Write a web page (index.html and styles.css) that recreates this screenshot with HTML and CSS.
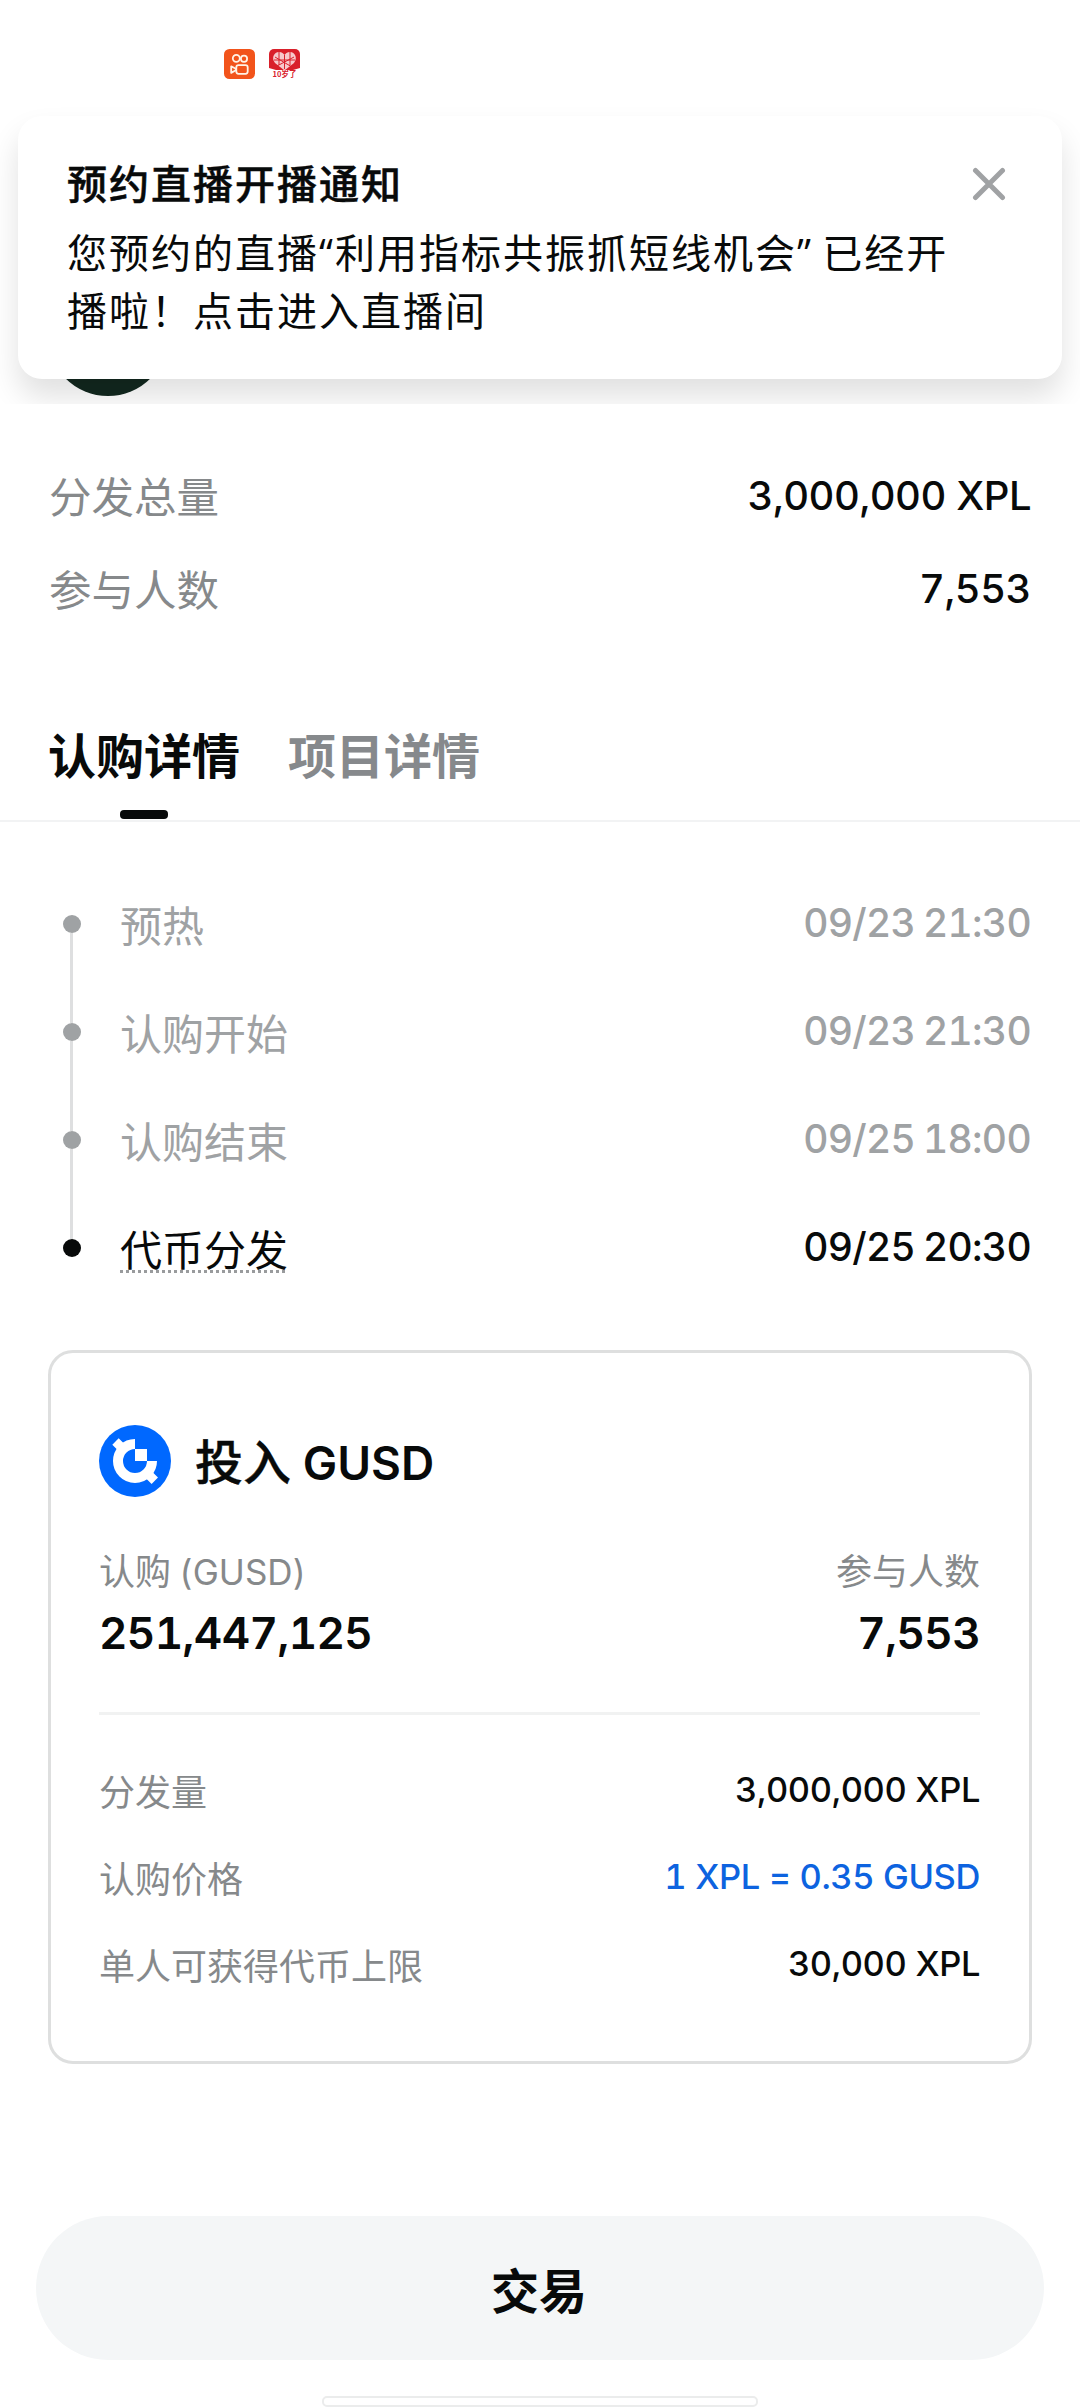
FILE: index.html
```html
<!DOCTYPE html>
<html lang="zh-CN">
<head>
<meta charset="utf-8">
<title>GUSD</title>
<link rel="stylesheet" href="styles.css">
</head>
<body>
<div class="screen">
  <header class="top">
    <div class="status">
      <svg class="app" viewBox="0 0 31 30">
        <rect width="31" height="30" rx="5.5" fill="#f2541b"/>
        <g fill="none" stroke="#fff3e6" stroke-width="1.8">
          <circle cx="12.3" cy="9.3" r="3.5"/><circle cx="20" cy="9.8" r="3.1"/>
          <rect x="12.3" y="16.2" width="11.4" height="8.6" rx="2.2"/>
          <path d="M7.2 17.3l4.6 2.4v1.6l-4.6 2.6z" stroke-linejoin="round"/>
        </g>
      </svg>
      <svg class="app" viewBox="0 0 31 30">
        <path d="M5 0h21a5 5 0 0 1 5 5v14l-7 2H7l-7-2V5a5 5 0 0 1 5-5z" fill="#d9202b"/>
        <path d="M15.500 21.500L6 14C2 9 5 3 10 3c3 0 4.500 1.500 5.500 3 1-1.500 2.500-3 5.500-3 5 0 8 6 4 11z" fill="#f7c9cc"/>
        <path d="M15.500 6v14M6 8l17 10M25 8L8 17M10 3v13M21 3v13M5 11h21" stroke="#d9202b" stroke-width="1"/>
        <text x="15.500" y="28.300" text-anchor="middle" class="app-text">10岁了</text>
      </svg>
    </div>
    <div class="coin"></div>
    <div class="toast">
      <div class="toast-head">
        <strong>预约直播开播通知</strong>
        <svg class="close" viewBox="0 0 34 34"><path d="M3.500 3.500l27 27M30.500 3.500l-27 27"/></svg>
      </div>
      <p>您预约的直播<span class="q">“</span>利用指标共振抓短线机会<span class="q">” </span>已经开<br>播啦！点击进入直播间</p>
    </div>
  </header>

  <section class="stats">
    <div class="row"><span>分发总量</span><b>3,000,000 XPL</b></div>
    <div class="row"><span>参与人数</span><b class="num">7,553</b></div>
  </section>

  <nav class="tabs">
    <div class="tab active">认购详情</div>
    <div class="tab">项目详情</div>
  </nav>

  <section class="timeline">
    <div class="step"><i></i><span>预热</span><time>09/23 21:30</time></div>
    <div class="step"><i></i><span>认购开始</span><time>09/23 21:30</time></div>
    <div class="step"><i></i><span>认购结束</span><time>09/25 18:00</time></div>
    <div class="step now"><i></i><span>代币分发</span><time>09/25 20:30</time></div>
  </section>

  <section class="card">
    <div class="card-title">
      <svg class="gusd" viewBox="0 0 72 72">
        <circle cx="36" cy="36" r="36" fill="#0068ff"/>
        <g fill="none" stroke="#fff">
          <path d="M36 19A17 17 0 1 0 53 36" stroke-width="10"/>
          <path d="M24 24l-7.500-7.500M48 48l7.800 7.800" stroke-width="9"/>
        </g>
        <path d="M36 24h12v12H36z" fill="#fff"/>
      </svg>
      <h2>投入 <span>GUSD</span></h2>
    </div>
    <div class="totals">
      <div><span>认购 <em>(GUSD)</em></span><b>251,447,125</b></div>
      <div><span>参与人数</span><b>7,553</b></div>
    </div>
    <div class="details">
      <div class="row"><span>分发量</span><b>3,000,000 XPL</b></div>
      <div class="row"><span>认购价格</span><b class="link">1 XPL = 0.35 GUSD</b></div>
      <div class="row"><span>单人可获得代币上限</span><b>30,000 XPL</b></div>
    </div>
  </section>

  <button class="trade">交易</button>
  <div class="home"></div>
</div>
</body>
</html>
```

FILE: styles.css
```css
* { box-sizing: border-box; margin: 0; padding: 0; }
body { background: #fff; font-family: "Noto Sans CJK SC", sans-serif; color: #080a0a; }
.screen { width: 1080px; height: 2408px; display: flex; flex-direction: column; overflow: hidden; }
.screen > * { flex: none; }
b, time, em { font-family: Inter, sans-serif; font-style: normal; font-weight: 500; font-variant-numeric: tabular-nums; white-space: pre; }

.top { position: relative; height: 404px; overflow: hidden; }
.status { display: flex; gap: 14px; padding: 49px 0 0 224px; }
.app { width: 31px; height: 30px; display: block; }
.app-text { font: bold 7.500px "Noto Sans CJK SC", sans-serif; fill: #d9202b; }
.coin { width: 120px; height: 120px; margin: 197px 0 0 48px; border-radius: 50%; background: #12281f; }
.toast { position: absolute; left: 18px; top: 116px; width: 1044px; height: 263px; padding: 37px 56px 0 49px; border-radius: 24px; background: #fff; box-shadow: 0 18px 30px rgba(0, 0, 0, .12); font-size: 40px; letter-spacing: 2px; }
.toast-head { display: flex; justify-content: space-between; align-items: center; height: 58px; }
.toast-head strong { font-weight: 500; -webkit-text-stroke: .5px currentColor; }
.close { width: 34px; height: 34px; margin-top: 4px; fill: none; stroke: #a0a2a4; stroke-width: 5; stroke-linecap: round; }
.toast p { margin-top: 11px; line-height: 58px; white-space: nowrap; }
.q { font-family: "Open Sans", sans-serif; line-height: 0; word-spacing: -3px; }

.stats { padding: 45px 49px 0 49px; }
.row { display: flex; justify-content: space-between; align-items: center; }
.stats .row { height: 93px; font-size: 42.500px; }
.stats .row span { padding-bottom: 3px; color: #86898b; }
.stats b { font-size: 40px; letter-spacing: -.5px; }

.tabs { display: flex; gap: 48px; height: 126px; margin-top: 61px; padding: 15px 48px 0; border-bottom: 2px solid #f2f3f4; font-size: 48px; font-weight: 700; line-height: 84px; color: #86898c; }
.tab { display: flex; flex-direction: column; align-items: center; height: 109px; }
.tab.active { color: #080a0a; }
.tab.active::after { content: ""; width: 48px; height: 9px; margin-top: 15px; border-radius: 4px; background: #080a0a; }

.timeline { padding: 48px 49px 0 63px; color: #9fa2a4; }
.step { position: relative; display: flex; align-items: center; height: 108px; font-size: 42px; }
.step i { width: 18px; height: 18px; margin-right: 39px; border-radius: 50%; background: #9fa2a4; }
.step:not(.now)::after { content: ""; position: absolute; left: 7px; top: 63px; width: 3px; height: 90px; background: #dedfe0; }
.step span { line-height: 50px; }
.step time { margin-left: auto; padding-bottom: 3px; font-size: 39px; letter-spacing: -.7px; word-spacing: -2px; }
.now { color: #080a0a; }
.now i { background: #080a0a; }
.now span { background: repeating-linear-gradient(90deg, #999b9d 0 3px, transparent 3px 6px) 0 100% / 100% 3px no-repeat; }

.card { height: 714px; margin: 48px 48px 0; padding: 72px 49px 0 48px; border: 3px solid #dedfdf; border-radius: 25px; }
.card-title { display: flex; align-items: center; gap: 24px; height: 72px; }
.gusd { width: 72px; height: 72px; }
h2 { padding-bottom: 4px; font-size: 48px; font-weight: 500; line-height: 72px; -webkit-text-stroke: .4px currentColor; }
h2 span { margin-left: 1px; font-family: Inter, sans-serif; font-size: 46px; font-weight: 600; line-height: 0; -webkit-text-stroke: 0; }
.totals { display: flex; justify-content: space-between; height: 218px; border-bottom: 3px solid #f1f2f2; padding-top: 45px; }
.totals div { display: flex; flex-direction: column; }
.totals div:last-child { align-items: flex-end; }
.totals span { font-size: 36px; line-height: 54px; color: #86898b; }
.totals em { font-weight: 400; font-size: 35px; line-height: 0; }
.totals b { font-size: 44px; font-weight: 600; line-height: 74px; letter-spacing: -.6px; }
.details { padding-top: 32px; }
.details .row { height: 87px; font-size: 36px; }
.details .row span { padding-bottom: 2px; color: #86898b; }
.details b { padding-bottom: 2px; font-size: 34.500px; letter-spacing: -.4px; }
.details .link { color: #0d63e0; }

.trade { width: 1008px; height: 144px; margin: 152px 36px 0; padding-right: 2px; border: 0; border-radius: 72px; background: #f4f6f7; font: 700 48px "Noto Sans CJK SC", sans-serif; color: #080a0a; }
.home { width: 436px; height: 11px; margin: 36px auto 0; border: 2px solid #ebecec; border-radius: 5px; }
```
